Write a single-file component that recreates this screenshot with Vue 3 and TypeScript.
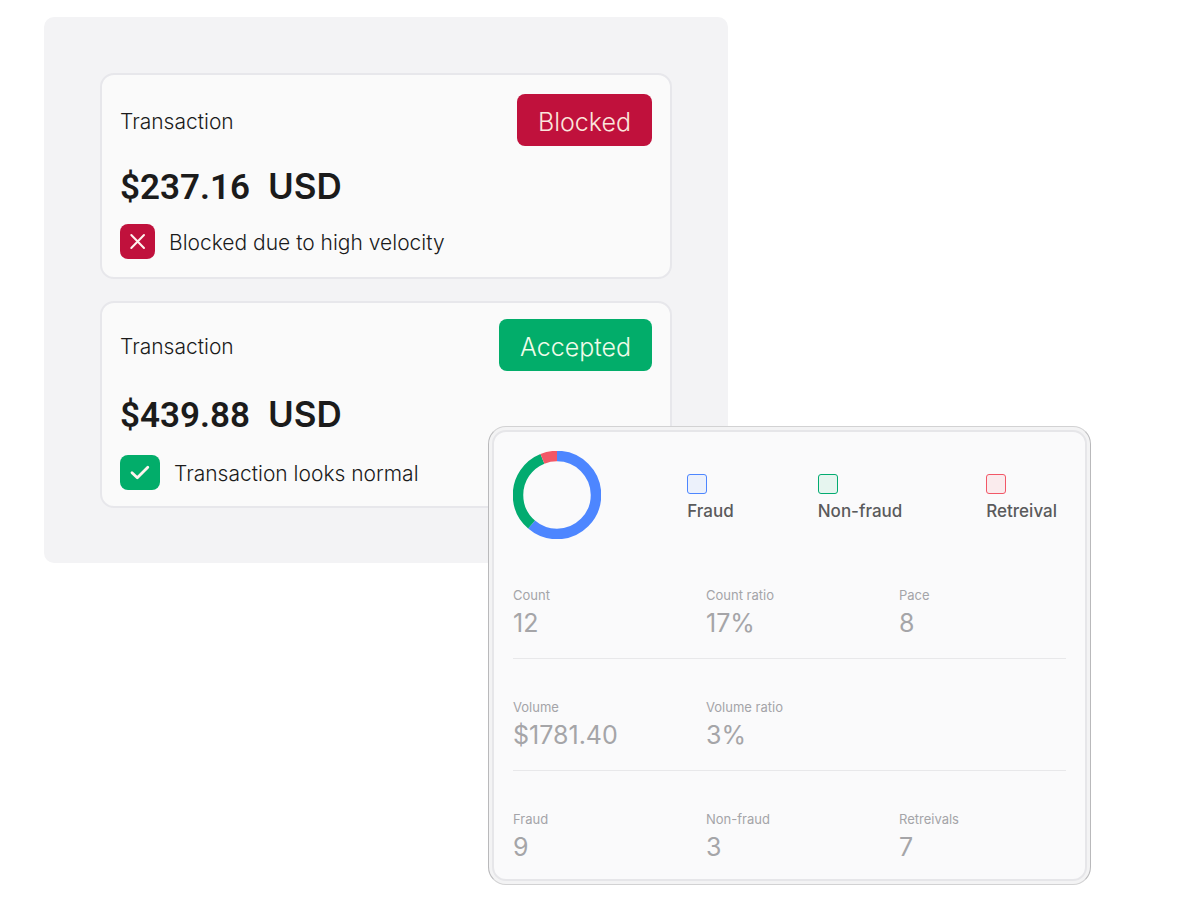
<script setup lang="ts">
interface Transaction {
  state: 'blocked' | 'accepted'
  badge: string
  amount: string
  currency: string
  reason: string
}

interface Metric {
  label: string
  value: string
}

interface Segment {
  tone: string
  share: number
  start: number
}

const transactions: Transaction[] = [
  { state: 'blocked', badge: 'Blocked', amount: '$237.16', currency: 'USD', reason: 'Blocked due to high velocity' },
  { state: 'accepted', badge: 'Accepted', amount: '$439.88', currency: 'USD', reason: 'Transaction looks normal' },
]

const legend = [
  { tone: 'blue', label: 'Fraud' },
  { tone: 'green', label: 'Non-fraud' },
  { tone: 'red', label: 'Retreival' },
]

// Shares are percentages of the ring, clockwise from the top.
const segments: Segment[] = [
  { tone: 'blue', share: 61.3, start: 0 },
  { tone: 'green', share: 32.6, start: 61.3 },
  { tone: 'red', share: 6.1, start: 93.9 },
]

const rows: Metric[][] = [
  [
    { label: 'Count', value: '12' },
    { label: 'Count ratio', value: '17%' },
    { label: 'Pace', value: '8' },
  ],
  [
    { label: 'Volume', value: '$1781.40' },
    { label: 'Volume ratio', value: '3%' },
  ],
  [
    { label: 'Fraud', value: '9' },
    { label: 'Non-fraud', value: '3' },
    { label: 'Retreivals', value: '7' },
  ],
]
</script>

<template>
  <main class="stage">
    <section class="panel">
      <article v-for="t in transactions" :key="t.state" class="card" :class="t.state">
        <header class="card-head">
          <h2 class="title">Transaction</h2>
          <span class="badge">{{ t.badge }}</span>
        </header>
        <p class="amount"><span class="figure">{{ t.amount }}</span><span>{{ t.currency }}</span></p>
        <p class="reason">
          <span class="mark">
            <svg v-if="t.state === 'blocked'" width="18" height="18" viewBox="0 0 18 18" aria-hidden="true">
              <path d="M2.3 2 15 15M15 2 2.3 15" />
            </svg>
            <svg v-else class="tick" width="20" height="16" viewBox="0 0 20 16" aria-hidden="true">
              <path d="M2 7.8 7.3 12.8 17.8 2.3" />
            </svg>
          </span>
          <span class="reason-text">{{ t.reason }}</span>
        </p>
      </article>
    </section>

    <section class="frame">
      <div class="stats">
        <div class="overview">
          <svg class="donut" width="88" height="88" viewBox="0 0 88 88" role="img" aria-label="Transaction breakdown">
            <circle
              v-for="s in segments"
              :key="s.tone"
              :class="s.tone"
              cx="44"
              cy="44"
              r="39"
              pathLength="100"
              :stroke-dasharray="`${s.share} ${100 - s.share}`"
              :stroke-dashoffset="-s.start"
              transform="rotate(-90 44 44)"
            />
          </svg>
          <ul class="legend">
            <li v-for="item in legend" :key="item.tone">
              <span class="swatch" :class="item.tone"></span>
              <span>{{ item.label }}</span>
            </li>
          </ul>
        </div>
        <dl v-for="(row, i) in rows" :key="i" class="metrics">
          <div v-for="m in row" :key="m.label">
            <dt>{{ m.label }}</dt>
            <dd>{{ m.value }}</dd>
          </div>
        </dl>
      </div>
    </section>
  </main>
</template>

<style>
body {
  background: #ffffff;
}
</style>

<style scoped>
.stage {
  display: grid;
  grid-template-columns: minmax(0, 444fr) minmax(0, 240fr) minmax(0, 363fr);
  align-items: start;
  padding: 17px 112px 16px 44px;
  font-family: Inter, "Liberation Sans", sans-serif;
  color: #1b1b1b;
}

h2,
p,
ul,
dl,
dd {
  margin: 0;
  padding: 0;
}

.panel {
  grid-area: 1 / 1 / 2 / 3;
  display: flex;
  flex-direction: column;
  gap: 22px;
  padding: 56px 56px 55px;
  border-radius: 10px;
  background: #f3f3f5;
}

.card {
  display: flex;
  flex-direction: column;
  border: 2px solid #e7e7eb;
  border-radius: 14px;
  background: #fafafa;
}

.blocked {
  --tone: #c0113c;
  --badge-text: #fbe6dc;
  padding: 19px 18px 18px;
}

.accepted {
  --tone: #02ad6a;
  --badge-text: #effbe9;
  padding: 16px 18px;
}

.card-head {
  display: flex;
  align-items: center;
  justify-content: space-between;
}

.title {
  padding-top: 4px;
  font-size: 21px;
  line-height: 28px;
  font-weight: 300;
}

.badge {
  padding: 12px 21px 8px;
  border-radius: 8px;
  background: var(--tone);
  color: var(--badge-text);
  font-size: 25px;
  line-height: 32px;
  font-weight: 300;
}

.amount {
  display: flex;
  align-items: baseline;
  gap: 18px;
  height: 40px;
  margin: 20px 0 18px;
  font-size: 35px;
  line-height: 40px;
  font-weight: 600;
}

.figure {
  font-family: Roboto, "Liberation Sans", sans-serif;
}

.accepted .amount {
  margin: 23px 0 21px;
}

.reason {
  display: flex;
  align-items: center;
  gap: 14px;
  font-size: 21px;
  line-height: 28px;
  font-weight: 300;
}

.reason-text {
  padding-top: 3px;
}

.mark {
  display: flex;
  align-items: center;
  justify-content: center;
  width: 35px;
  height: 35px;
  border-radius: 8px;
  background: var(--tone);
}

.accepted .mark {
  width: 40px;
}

.mark path {
  fill: none;
  stroke: #fff3ee;
  stroke-width: 2;
  stroke-linecap: round;
  stroke-linejoin: round;
}

.mark .tick path {
  stroke-width: 2.8;
}

.frame {
  grid-area: 1 / 2 / 2 / 4;
  margin-top: 409px;
  padding: 3px;
  border: 1px solid;
  border-color: #d2d2d3 #b9b9bb;
  border-radius: 18px;
  background: #f3f3f4;
}

.stats {
  padding: 19px 19px 16px;
  border: 2px solid #e6e6e9;
  border-radius: 14px;
  background: #fafafb;
}

.overview {
  display: flex;
  justify-content: space-between;
  margin-bottom: 8px;
}

.donut {
  flex: none;
}

.donut circle {
  fill: none;
  stroke: var(--ring);
  stroke-width: 10.5;
}

.blue {
  --ring: #4d86ff;
  --tint: #ecf1fb;
}

.green {
  --ring: #02ab70;
  --tint: #e6f5ef;
}

.red {
  --ring: #f25767;
  --tint: #faebed;
}

.legend {
  display: flex;
  gap: 84px;
  padding: 23px 9px 0 0;
  list-style: none;
  color: #5a5a5c;
  font-size: 17px;
  line-height: 20px;
  font-weight: 500;
}

.legend li {
  display: flex;
  flex-direction: column;
  gap: 7px;
}

.swatch {
  box-sizing: border-box;
  width: 20px;
  height: 20px;
  border: 1px solid var(--ring);
  border-radius: 3px;
  background: var(--tint);
}

.metrics {
  display: grid;
  grid-template-columns: 193fr 193fr 167fr;
  padding: 40px 0 19px;
  border-bottom: 1px solid #e8e8ea;
}

.metrics:last-child {
  padding-bottom: 0;
  border-bottom: 0;
}

dt {
  margin-bottom: 4px;
  color: #a4a4a8;
  font-size: 13px;
  line-height: 16px;
  font-weight: 400;
}

dd {
  color: #a5a5a8;
  font-size: 25px;
  line-height: 32px;
}
</style>
